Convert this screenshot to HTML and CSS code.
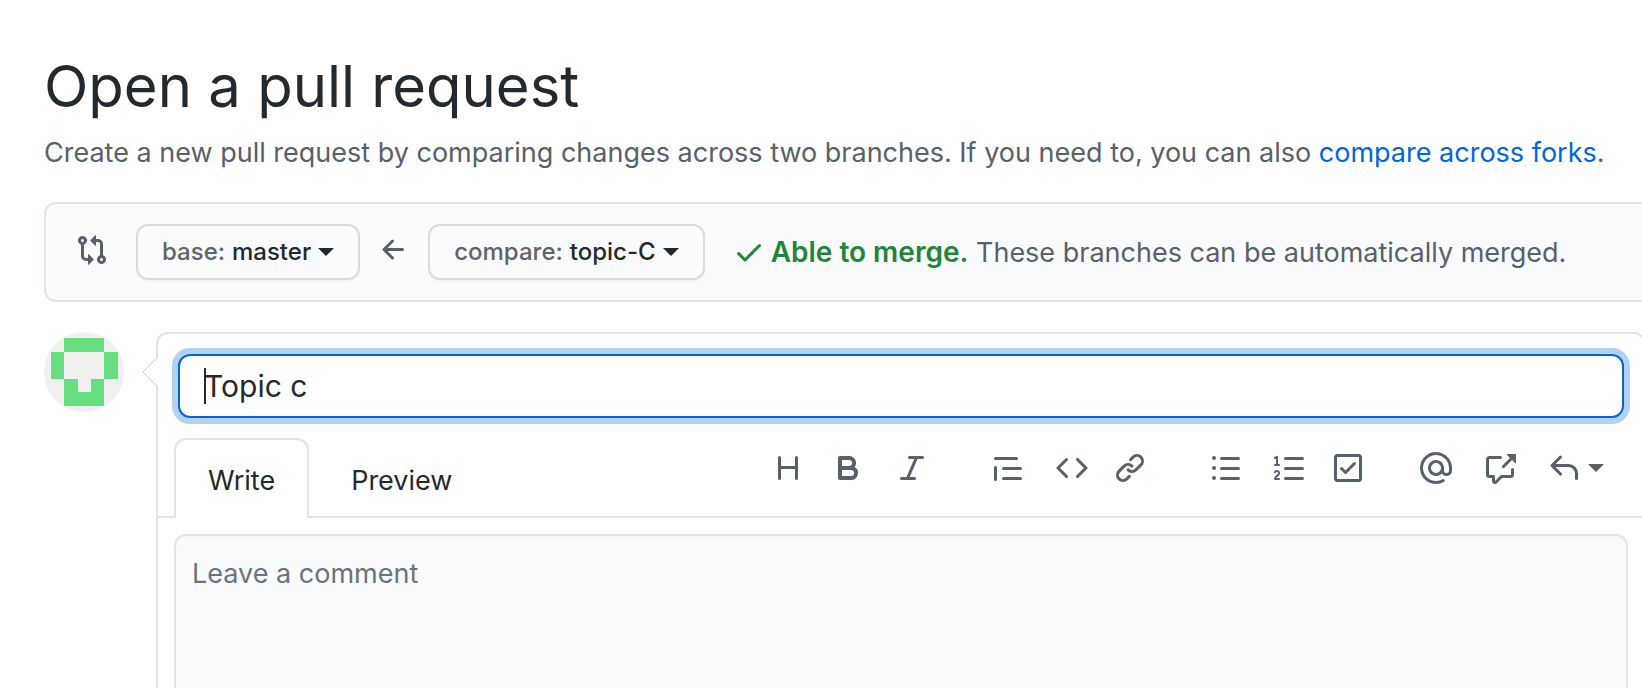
FILE: index.html
```html
<!DOCTYPE html>
<html lang="en">
<head>
<meta charset="utf-8">
<title>Open a pull request</title>
<link rel="stylesheet" href="styles.css">
</head>
<body>
<main class="page">
  <header class="subhead">
    <h1 class="title">Open a pull request</h1>
    <p class="description">Create a new pull request by comparing changes across two branches. If you need to, you can also <a class="link" href="#forks">compare across forks</a>.</p>
  </header>

  <section class="range" aria-label="Branches">
    <svg class="icon icon-range" viewBox="0 0 16 16" aria-hidden="true"><path fill-rule="evenodd" d="M9.573.677L7.177 3.073a.25.25 0 000 .354l2.396 2.396A.25.25 0 0010 5.646V4h1a1 1 0 011 1v5.628a2.251 2.251 0 101.5 0V5A2.5 2.5 0 0011 2.5h-1V.854a.25.25 0 00-.427-.177zM6 12v-1.646a.25.25 0 01.427-.177l2.396 2.396a.25.25 0 010 .354l-2.396 2.396A.25.25 0 016 15.146V13.5H5A2.5 2.5 0 012.5 11V5.372a2.25 2.25 0 111.5 0V11a1 1 0 001 1h1zm6.75 0a.75.75 0 100 1.5.75.75 0 000-1.5zM4 3.25a.75.75 0 11-1.5 0 .75.75 0 011.5 0z"/></svg>
    <button class="branch branch-base" type="button"><span class="branch-label">base:</span> <span>master</span><span class="caret"></span></button>
    <svg class="icon icon-range" viewBox="0 0 16 16" aria-hidden="true"><path d="M7.78 12.53a.75.75 0 01-1.06 0L2.47 8.28a.75.75 0 010-1.06l4.25-4.25a.75.75 0 011.06 1.06L4.81 7h7.44a.75.75 0 010 1.5H4.81l2.97 2.97a.75.75 0 010 1.06z"/></svg>
    <button class="branch" type="button"><span class="branch-label">compare:</span> <span>topic-C</span><span class="caret"></span></button>
    <p class="merge">
      <svg class="icon icon-ok" viewBox="0 0 16 16" aria-hidden="true"><path d="M13.78 4.22a.75.75 0 010 1.06l-7.25 7.25a.75.75 0 01-1.06 0L2.22 9.28a.75.75 0 011.06-1.06L6 10.94l6.72-6.72a.75.75 0 011.06 0z"/></svg>
      <span><strong class="merge-ok">Able to merge.</strong> These branches can be automatically merged.</span>
    </p>
  </section>

  <section class="compose">
    <svg class="avatar" viewBox="0 0 80 80" role="img" aria-label="Your avatar">
      <rect width="80" height="80" fill="#f0f0f0"/>
      <path fill="#67de7f" d="M20 6h40v14H20zM7 20h13v27H7zM60 20h14v27H60zM20 47h14v13h13V47h13v27H20z"/>
    </svg>
    <form class="box">
      <svg class="pointer" viewBox="0 0 16 32" aria-hidden="true"><path d="M16 1L1 16l15 15" fill="#fff" stroke="#cdd1d6"/></svg>
      <div class="title-field">
        <input class="title-input" type="text" value="Topic c" aria-label="Title">
        <span class="text-cursor"></span>
      </div>
      <div class="tabs">
        <button class="tab tab-selected" type="button">Write</button>
        <button class="tab" type="button">Preview</button>
        <div class="toolbar">
          <div class="tools tools-text">
            <button class="tool" type="button" aria-label="Heading"><svg class="icon" viewBox="0 0 16 16"><path d="M3.75 2a.75.75 0 01.75.75V7h7V2.75a.75.75 0 011.5 0v10.5a.75.75 0 01-1.5 0V8.5h-7v4.75a.75.75 0 01-1.5 0V2.75A.75.75 0 013.75 2z"/></svg></button>
            <button class="tool" type="button" aria-label="Bold"><svg class="icon" viewBox="0 0 16 16"><path fill-rule="evenodd" d="M4 2a1 1 0 00-1 1v10a1 1 0 001 1h5.5a3.5 3.5 0 001.852-6.47A3.5 3.5 0 008.5 2H4zm4.5 5a1.5 1.5 0 100-3H5v3h3.5zM5 9v3h4.5a1.5 1.5 0 000-3H5z"/></svg></button>
            <button class="tool" type="button" aria-label="Italic"><svg class="icon" viewBox="0 0 16 16"><path d="M6 2.75A.75.75 0 016.75 2h6.5a.75.75 0 010 1.5h-2.505l-3.858 9H9.25a.75.75 0 010 1.5h-6.5a.75.75 0 010-1.5h2.505l3.858-9H6.75A.75.75 0 016 2.75z"/></svg></button>
          </div>
          <div class="tools">
            <button class="tool" type="button" aria-label="Quote"><svg class="icon" viewBox="0 0 16 16"><path d="M1.75 2.5a.75.75 0 000 1.5h10.5a.75.75 0 000-1.5H1.75zm4 5a.75.75 0 000 1.5h8.5a.75.75 0 000-1.5h-8.5zm0 5a.75.75 0 000 1.5h8.5a.75.75 0 000-1.5h-8.5zM2.5 7.75a.75.75 0 00-1.5 0v6a.75.75 0 001.5 0v-6z"/></svg></button>
            <button class="tool" type="button" aria-label="Code"><svg class="icon" viewBox="0 0 16 16"><path d="M4.72 3.22a.75.75 0 011.06 1.06L2.06 8l3.72 3.72a.75.75 0 11-1.06 1.06L.47 8.53a.75.75 0 010-1.06l4.25-4.25zm6.56 0a.75.75 0 10-1.06 1.06L13.94 8l-3.72 3.72a.75.75 0 101.06 1.06l4.25-4.25a.75.75 0 000-1.06l-4.25-4.25z"/></svg></button>
            <button class="tool" type="button" aria-label="Link"><svg class="icon" viewBox="0 0 16 16"><path d="M7.775 3.275a.75.75 0 001.06 1.06l1.25-1.25a2 2 0 112.83 2.83l-2.5 2.5a2 2 0 01-2.83 0 .75.75 0 00-1.06 1.06 3.5 3.5 0 004.95 0l2.5-2.5a3.5 3.5 0 00-4.95-4.95l-1.25 1.25zm-4.69 9.64a2 2 0 010-2.83l2.5-2.5a2 2 0 012.83 0 .75.75 0 001.06-1.06 3.5 3.5 0 00-4.95 0l-2.5 2.5a3.5 3.5 0 004.95 4.95l1.25-1.25a.75.75 0 00-1.06-1.06l-1.25 1.25a2 2 0 01-2.83 0z"/></svg></button>
          </div>
          <div class="tools">
            <button class="tool" type="button" aria-label="Bulleted list"><svg class="icon" viewBox="0 0 16 16"><path d="M2 4a1 1 0 100-2 1 1 0 000 2zm3.750-1.500a.75.75 0 000 1.500h8.500a.75.75 0 000-1.500h-8.500zm0 5a.75.75 0 000 1.500h8.500a.75.75 0 000-1.500h-8.500zm0 5a.75.75 0 000 1.500h8.500a.75.75 0 000-1.500h-8.500zM3 8a1 1 0 11-2 0 1 1 0 012 0zm-1 6a1 1 0 100-2 1 1 0 000 2z"/></svg></button>
            <button class="tool" type="button" aria-label="Numbered list"><svg class="icon" viewBox="0 0 16 16"><path d="M2.003 2.5a.5.5 0 00-.723-.447l-1.003.5a.5.5 0 00.446.895l.28-.14V6H.5a.5.5 0 000 1h2.006a.5.5 0 100-1h-.503V2.5zM5 3.25a.75.75 0 01.75-.75h8.5a.75.75 0 010 1.5h-8.5A.75.75 0 015 3.25zm0 5a.75.75 0 01.75-.75h8.5a.75.75 0 010 1.5h-8.5A.75.75 0 015 8.25zm0 5a.75.75 0 01.75-.75h8.5a.75.75 0 010 1.5h-8.5a.75.75 0 01-.75-.75zM.924 10.32l.003-.004a.851.851 0 01.144-.153A.66.66 0 011.5 10c.195 0 .306.068.374.146a.57.57 0 01.128.376c0 .453-.269.682-.8 1.078l-.035.025C.692 11.98 0 12.495 0 13.5a.5.5 0 00.5.5h2.003a.5.5 0 000-1H1.146c.132-.197.351-.372.654-.597l.047-.035c.47-.35 1.156-.858 1.156-1.845 0-.365-.118-.744-.377-1.038-.268-.303-.658-.484-1.126-.484-.48 0-.84.202-1.068.392a1.858 1.858 0 00-.348.384l-.007.011-.002.004-.001.002-.001.001a.5.5 0 00.851.525z"/></svg></button>
            <button class="tool" type="button" aria-label="Task list"><svg class="icon" viewBox="0 0 16 16"><path fill-rule="evenodd" d="M2.5 2.75a.25.25 0 01.25-.25h10.5a.25.25 0 01.25.25v10.5a.25.25 0 01-.25.25H2.75a.25.25 0 01-.25-.25V2.75zM2.75 1A1.75 1.75 0 001 2.75v10.5c0 .966.784 1.75 1.75 1.75h10.5A1.75 1.75 0 0015 13.25V2.75A1.75 1.75 0 0013.25 1H2.75zm9.03 5.28a.75.75 0 00-1.06-1.06L6.75 9.19 5.28 7.72a.75.75 0 00-1.06 1.06l2 2a.75.75 0 001.06 0l4.5-4.5z"/></svg></button>
          </div>
          <div class="tools tools-refs">
            <button class="tool" type="button" aria-label="Mention"><svg class="icon" viewBox="0 0 16 16"><path fill-rule="evenodd" d="M4.75 2.37a6.5 6.5 0 006.5 11.26.75.75 0 01.75 1.298 8 8 0 113.994-7.273.754.754 0 01.006.095v1.5a2.75 2.75 0 01-5.072 1.475A4 4 0 1112 8v1.25a1.25 1.25 0 002.5 0V7.867a6.5 6.5 0 00-9.75-5.496V2.37zM10.5 8a2.5 2.5 0 10-5 0 2.5 2.5 0 005 0z"/></svg></button>
            <button class="tool" type="button" aria-label="Reference"><svg class="icon" viewBox="0 0 16 16"><path d="M16 1.25v4.146a.25.25 0 01-.427.177L14.03 4.03l-3.75 3.75a.75.75 0 11-1.06-1.06l3.75-3.75-1.543-1.543A.25.25 0 0111.604 1h4.146a.25.25 0 01.25.25zM2.75 3.5a.25.25 0 00-.25.25v7.5c0 .138.112.25.25.25h2a.75.75 0 01.75.75v2.19l2.72-2.72a.75.75 0 01.53-.22h4.5a.25.25 0 00.25-.25v-2.5a.75.75 0 111.5 0v2.5A1.75 1.75 0 0113.25 13H9.06l-2.573 2.573A1.457 1.457 0 014 14.543V13H2.75A1.75 1.75 0 011 11.25v-7.5C1 2.784 1.784 2 2.75 2h5.500a.75.75 0 010 1.500h-5.500z"/></svg></button>
            <button class="tool" type="button" aria-label="Saved replies"><svg class="icon" viewBox="0 0 16 16"><path d="M6.78 1.97a.75.75 0 010 1.06L3.81 6h6.44A4.75 4.75 0 0115 10.75v2.5a.75.75 0 01-1.5 0v-2.5a3.25 3.25 0 00-3.25-3.25H3.81l2.97 2.97a.75.75 0 11-1.06 1.06L1.47 7.28a.75.75 0 010-1.06l4.25-4.25a.75.75 0 011.06 0z"/></svg><span class="caret"></span></button>
          </div>
        </div>
      </div>
      <div class="comment">
        <textarea class="comment-input" placeholder="Leave a comment" aria-label="Comment"></textarea>
      </div>
    </form>
  </section>
</main>
</body>
</html>
```
FILE: styles.css
```css
* {
  box-sizing: border-box;
}

body {
  margin: 0;
  background: #fff;
  color: #24292e;
  font-family: Inter, "Liberation Sans", sans-serif;
  font-size: 27px;
  line-height: 40px;
}

button,
input,
textarea {
  margin: 0;
  color: inherit;
  font: inherit;
}

.page {
  display: flex;
  flex-direction: column;
  height: 100vh;
  padding: 48px 0 0 44px;
  overflow: hidden;
}

.title {
  margin: 0;
  font-size: 58px;
  font-weight: 400;
  line-height: 76px;
}

.description {
  margin: 9px 0 0;
  color: #586069;
  white-space: nowrap;
}

.link {
  color: #0366d6;
  text-decoration: none;
}

.icon {
  display: block;
  flex: none;
  width: 32px;
  height: 32px;
  fill: #586069;
}

/* Runs past the right edge of the window */
.range {
  display: flex;
  flex: none;
  align-items: center;
  height: 100px;
  margin: 29px -20px 0 0;
  padding: 0 30px;
  border: 2px solid #e1e4e8;
  border-radius: 12px;
  background: #fafbfc;
  white-space: nowrap;
}

.icon-range {
  margin-bottom: 4px;
}

.branch {
  display: flex;
  align-items: center;
  gap: 7px;
  height: 56px;
  margin: 0 18px;
  padding: 0 24px;
  border: 2px solid #d9dadc;
  border-radius: 12px;
  background: #fafbfc;
  box-shadow: 0 2px 0 #f3f4f6;
  font-size: 24px;
  font-weight: 500;
}

.branch-base {
  margin-left: 28px;
}

.branch-label {
  color: #5f6469;
}

.caret {
  border: 8px solid transparent;
  border-top-color: currentColor;
  border-bottom-width: 0;
}

.merge {
  display: flex;
  align-items: center;
  gap: 6px;
  margin: 0 0 0 10px;
  color: #586069;
}

.icon-ok {
  fill: #22863a;
}

.merge-ok {
  color: #22863a;
  font-size: 28px;
  font-weight: 600;
}

.compose {
  display: flex;
  flex: 1;
  gap: 32px;
  margin: 30px -4px 0 0;
}

.avatar {
  flex: none;
  width: 80px;
  height: 80px;
  border-radius: 50%;
}

.box {
  position: relative;
  display: flex;
  flex: 1;
  flex-direction: column;
  min-width: 0;
  border: 2px solid #e1e4e8;
  border-bottom: 0;
  border-radius: 12px 12px 0 0;
}

.pointer {
  position: absolute;
  top: 22px;
  left: -16px;
  width: 16px;
  height: 32px;
}

.title-field {
  position: relative;
  padding: 20px;
}

.title-input {
  display: block;
  width: 100%;
  height: 64px;
  padding: 0 24px;
  border: 2px solid #0366d6;
  border-radius: 12px;
  outline: 0;
  background: #fff;
  box-shadow: 0 0 0 6px #b3d1f3;
  font-size: 30px;
}

.text-cursor {
  position: absolute;
  top: 34px;
  left: 46px;
  width: 2px;
  height: 36px;
  background: #24292e;
}

.tabs {
  display: flex;
  height: 80px;
  padding: 0 40px 0 16px;
  box-shadow: inset 0 -2px #e1e4e8;
}

.tab {
  padding: 6px 42px 0;
  border: 0;
  background: none;
}

.tab-selected {
  padding: 4px 32px 0;
  border: 2px solid #e1e4e8;
  border-bottom: 0;
  border-radius: 12px 12px 0 0;
  background: #fff;
}

.toolbar {
  display: flex;
  gap: 64px;
  margin-left: auto;
  padding-top: 14px;
}

.tools {
  display: grid;
  grid-template-columns: 64px 58px 32px;
  align-items: start;
}

.tools-text {
  grid-template-columns: 60px 64px 32px;
}

.tools-refs {
  grid-template-columns: 64px 64px 56px;
  margin-left: -8px;
}

.tool {
  display: flex;
  align-items: center;
  gap: 8px;
  padding: 0;
  border: 0;
  background: none;
  color: #586069;
}

.comment {
  display: flex;
  flex: 1;
  padding: 16px 16px 0;
}

.comment-input {
  flex: 1;
  padding: 18px 16px;
  border: 2px solid #e1e4e8;
  border-bottom: 0;
  border-radius: 12px 12px 0 0;
  outline: 0;
  background: #fafbfc;
  box-shadow: inset 0 2px 0 #f6f8fa;
  resize: none;
}

.comment-input::placeholder {
  color: #6a737d;
}
```
